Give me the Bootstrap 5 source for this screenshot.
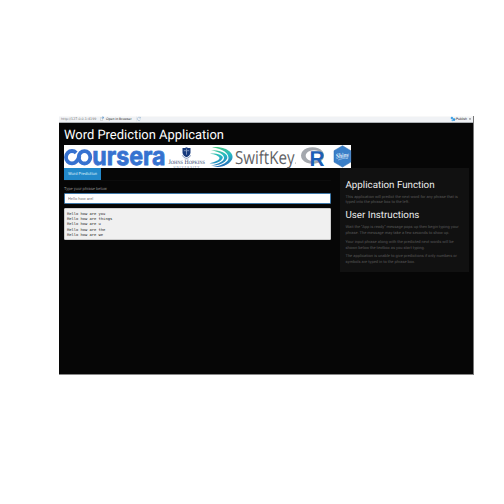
<!DOCTYPE html>
<html lang="en">
<head>
<meta charset="utf-8">
<meta name="viewport" content="width=device-width, initial-scale=1">
<title>Word Prediction Application</title>
<link href="https://cdn.jsdelivr.net/npm/bootstrap@5.3.0/dist/css/bootstrap.min.css" rel="stylesheet">
<style>
body{background:#fff;font-family:Roboto,"Liberation Sans",sans-serif;font-size:4px;line-height:6px;overflow:hidden;text-rendering:geometricPrecision}
.viewer{width:415px;height:259px;margin:115.5px 0 0 59px;background:#060606;border-right:1px solid #777;border-bottom:1px solid #888}
.toolbar{height:7px;background:#f0f2f5;border-bottom:1px solid #aeb2b6;border-top:1px solid #f8f8f8;font-family:"Liberation Sans",sans-serif;font-size:3.45px;line-height:6px;color:#222}
.url{width:40px;padding-left:2px;color:#777;font-family:"DejaVu Sans",sans-serif;font-size:3.3px}
.toolbar svg{display:block}
.app-title{color:#fff;font-size:12.95px;line-height:16px;font-weight:400;height:22.5px;padding:5.5px 0 0 5px;margin:0;white-space:nowrap}
.banner{display:block;width:287px;height:23px;margin-left:5px;overflow:visible}
.main-col{width:267px;margin-left:5px}
.side-col{width:129px;height:104px;margin-left:9px;background:#111;padding:11.6px 5.5px 0;color:#5a5a5a;white-space:nowrap}
.tabs{border-bottom:1px solid #0c0c0c;height:13px}
.tabs .nav-link.active{width:37px;height:12px;padding:1px 0 0;margin:0;border-radius:0;background:#2389ca;color:#d9edf8;font-size:4.1px;line-height:11.5px;text-align:center}
.phrase-label{height:12px;margin:0;padding-top:5.6px;font-size:4.1px;line-height:6px;color:#8c8c8c}
.phrase-input{height:11px;padding:0 3px;border:1px solid #3f79a9;border-radius:1px;background:#fff;color:#777;font-size:4px;line-height:9px;min-height:0}
.output{height:32px;margin:4px 0 0;padding:3px 2px 0;background:#f0f0f0;border:1px solid #ccc;border-radius:1px;color:#222;font-family:"DejaVu Sans Mono",monospace;font-size:3.75px;line-height:5.2px;overflow:hidden}
.side-col h2{font-size:9.75px;line-height:12px;color:#eee;font-weight:400;margin:0}
.side-col p{margin:0 0 2.8px;font-size:4.02px;line-height:5.8px}
.side-col h2 + p{margin-top:2px}
.side-col h2:not(:first-child){margin-top:5.300px}
</style>
<script src="https://cdn.jsdelivr.net/npm/bootstrap@5.3.0/dist/js/bootstrap.bundle.min.js"></script>
</head>
<body>
<div class="viewer">
  <div class="toolbar d-flex align-items-center">
    <span class="url">http://127.0.0.1:4199</span>
    <svg width="7" height="6" viewBox="0 0 7 6"><path d="M1.500 1.500h2v3h-2z" fill="#fff" stroke="#aaa" stroke-width=".4"/><path d="M2.500 3.200L4.400 1.200M3 1h1.500v1.500" fill="none" stroke="#4a90d0" stroke-width=".6"/></svg>
    <span>Open in Browser</span>
    <svg class="ms-1" width="9" height="6" viewBox="0 0 9 6"><path d="M0 .5v5" stroke="#ccc" stroke-width=".5"/><path d="M4.400 3.800A1.700 1.700 0 1 1 4.300 1.800M4.500.9v1.200H3.300" fill="none" stroke="#9cb8d4" stroke-width=".6"/></svg>
    <svg class="ms-auto" width="6" height="6" viewBox="0 0 6 6"><circle cx="1.900" cy="2" r="1.200" fill="#45a5e8"/><circle cx="4" cy="3.600" r="1.300" fill="#2e93dd"/><circle cx="2.400" cy="4.300" r=".9" fill="#63b4ec"/></svg>
    <span>Publish</span>
    <svg width="6" height="6" viewBox="0 0 6 6"><path d="M2 2.500h2L3 4z" fill="#555"/></svg>
  </div>
  <h1 class="app-title">Word Prediction Application</h1>
  <svg class="banner" viewBox="0 0 287 23" role="img" aria-label="Partner logos">
    <rect width="287" height="23" fill="#fff"/>
    <g fill="none" stroke="#3672d0" stroke-width="3.800"><path d="M12.200 7.800A6 6.200 0 1 0 12.200 16.600Q14.500 14.500 15.500 11"/><ellipse cx="20.500" cy="12.300" rx="5.800" ry="6.200"/></g>
    <text x="28.300" y="20" textLength="73.200" lengthAdjust="spacingAndGlyphs" font-family="Inter,sans-serif" font-weight="700" font-size="25.500" fill="#3672d0" stroke="#3672d0" stroke-width=".8">ursera</text>
    <g><path d="M118.500 3q2 .3 4-.8 2 1.100 4 .8v4.800q-.5 3-4 4.500-3.500-1.500-4-4.500z" fill="#183a7c"/><path d="M119.800 5.800q1.400-.6 2.700.3 1.300-.9 2.700-.3M122.500 3.700v6" fill="none" stroke="#b9c8df" stroke-width=".6"/><path d="M118.300 10.300q1 2.500 4.200 3.200 3.200-.7 4.200-3.200" fill="none" stroke="#5774a4" stroke-width=".7"/></g>
    <g font-family="Liberation Serif,serif" fill="#1d3768"><text x="104.500" y="19.100" textLength="36.500" lengthAdjust="spacingAndGlyphs" font-size="6.400">J<tspan font-size="5">OHNS</tspan> H<tspan font-size="5">OPKINS</tspan></text><text x="109.500" y="22.700" textLength="26" font-size="3" fill="#7182a0">UNIVERSITY</text></g>
    <defs><linearGradient id="swirl" gradientUnits="userSpaceOnUse" x1="150" y1="1" x2="154" y2="23"><stop offset="0" stop-color="#4ccb7c"/><stop offset=".5" stop-color="#27b9c4"/><stop offset="1" stop-color="#2567b8"/></linearGradient></defs>
    <g fill="url(#swirl)"><path d="M148 2.200C163 1 171 9 168 14.500C164 21.500 155 22.500 149 22C158 20.500 165 17 164.500 12.500C164 7 157 3.500 148 2.200z"/><path d="M147 5.300C157 4.500 164.500 9 163.300 13.200C161 19 153 21 147 20.500C154 19 160.500 16 160 12.500C159.500 9 154 6.500 147 5.300z"/><path d="M146 8.500C153 8 159.500 10 158.800 12.800C157.500 17 151 19 145.500 18.500C151 17 156 15 155.500 12.800C155 11 151 9.500 146 8.500z"/></g>
    <text x="171" y="18.700" textLength="59.500" lengthAdjust="spacingAndGlyphs" font-family="Open Sans,sans-serif" font-size="18" fill="#5e6164">SwiftKey</text><circle cx="231.500" cy="18" r=".5" fill="#888"/>
    <path fill-rule="evenodd" d="M248.500 2.200a11.500 8.300 0 1 0 .01 0zM250 5.300a8.300 5.500 0 1 1-.01 0z" fill="#a4a8ae"/>
    <text x="245.500" y="21.300" textLength="15" lengthAdjust="spacingAndGlyphs" font-family="Liberation Sans,sans-serif" font-weight="700" font-size="21.500" fill="#1d5fb6">R</text>
    <path d="M278.500.7l8.300 5v11.400l-8.300 5-8.500-5V5.700z" fill="#3a7fc8" stroke="#2b69ae" stroke-width=".5"/>
    <text x="272" y="12.800" textLength="13" lengthAdjust="spacingAndGlyphs" font-family="Liberation Serif,serif" font-style="italic" font-weight="700" font-size="7" fill="#e4f0fb" transform="rotate(-8 278 12)">Shiny</text><path d="M274 15q5-2 9.500-2" fill="none" stroke="#bcd7f0" stroke-width=".6"/>
  </svg>
  <div class="d-flex align-items-start">
    <main class="main-col">
      <ul class="nav nav-tabs tabs"><li class="nav-item"><a class="nav-link active border-0" href="#">Word Prediction</a></li></ul>
      <label class="phrase-label d-block" for="phrase">Type your phrase below</label>
      <input id="phrase" class="form-control phrase-input" value="Hello how are|">
      <pre class="output">Hello how are you
Hello how are things
Hello how are u
Hello how are the
Hello how are we</pre>
    </main>
    <aside class="side-col">
      <h2>Application Function</h2>
      <p>This application will predict the next word for any phrase that is<br>typed into the phrase box to the left.</p>
      <h2>User Instructions</h2>
      <p>Wait the "App is ready" message pops up then begin typing your<br>phrase. The message may take a few seconds to show up.</p>
      <p>Your input phrase along with the predicted next words will be<br>shown below the textbox as you start typing.</p>
      <p>The application is unable to give predictions if only numbers or<br>symbols are typed in to the phrase box.</p>
    </aside>
  </div>
</div>
</body>
</html>
